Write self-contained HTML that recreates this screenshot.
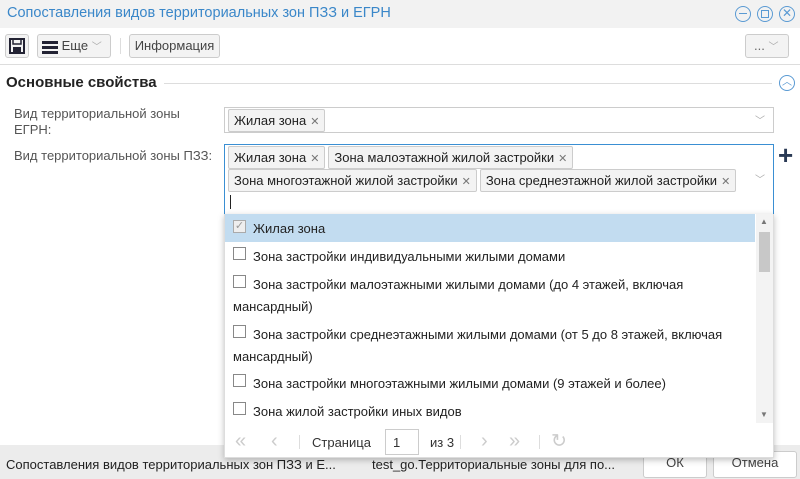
<!DOCTYPE html>
<html><head><meta charset="utf-8"><style>
*{box-sizing:border-box;margin:0;padding:0}
body{width:800px;height:479px;overflow:hidden;background:#fff;font-family:"Liberation Sans",Arial,sans-serif;font-size:13px;color:#333;position:relative}
.abs{position:absolute}
.title{left:0;top:0;width:800px;height:28px;background:#f2f2f2;color:#3a87c9;font-size:14.5px;line-height:27px;padding-left:7px}
.btn{border:1px solid #ccc;border-radius:3px;background:#f3f3f3;height:24px;line-height:22px;color:#444}
.circ{width:16px;height:16px;border:1.3px solid #5a9ad3;border-radius:50%}
.tag{display:inline-block;border:1px solid #ccc;border-radius:2px;background:#f3f3f3;height:23px;line-height:21px;padding:0 5px;margin:3px 0 0 3px;color:#222;font-size:13px}
.tag b{font-weight:normal;color:#777;margin-left:4px;font-size:11px}
.row{position:absolute;left:0;width:530px;padding-left:8px;line-height:22px;color:#222}
.cb{display:inline-block;width:13px;height:13px;border:1px solid #888;background:#fff;vertical-align:1px;margin-right:7px}
.pg{color:#ccc;font-size:20px}
.chev{color:#aaa;font-size:10px}
</style></head><body>
<div class="abs title">Сопоставления видов территориальных зон ПЗЗ и ЕГРН</div>
<div class="abs circ" style="left:735px;top:6px"><div style="position:absolute;left:3px;top:6px;width:8px;height:1.3px;background:#5a9ad3"></div></div>
<div class="abs circ" style="left:757px;top:6px"><div style="position:absolute;left:3px;top:3px;width:8px;height:8px;border:1px solid #5a9ad3"></div></div>
<div class="abs circ" style="left:779px;top:6px;color:#5a9ad3;font-size:12px;line-height:13px;text-align:center">✕</div>

<div class="abs btn" style="left:5px;top:34px;width:24px"><svg width="22" height="22" viewBox="0 0 22 22"><rect x="4" y="4" width="14" height="14" fill="none" stroke="#223" stroke-width="2"/><rect x="7" y="4" width="8" height="5" fill="none" stroke="#223" stroke-width="1.5"/><rect x="7" y="12" width="8" height="6" fill="#223"/></svg></div>
<div class="abs btn" style="left:37px;top:34px;width:74px;padding-left:4px"><span style="display:inline-block;width:16px;vertical-align:middle"><span style="display:block;height:3px;background:#223;margin:2px 0"></span><span style="display:block;height:3px;background:#223;margin:2px 0"></span><span style="display:block;height:3px;background:#223"></span></span> Еще <span class="chev">﹀</span></div>
<div class="abs" style="left:120px;top:38px;width:1px;height:16px;background:#ddd"></div>
<div class="abs btn" style="left:129px;top:34px;width:91px;text-align:center">Информация</div>
<div class="abs btn" style="left:745px;top:34px;width:44px;padding-left:8px;color:#666">... <span class="chev">﹀</span></div>
<div class="abs" style="left:0;top:64px;width:800px;height:1px;background:#ddd"></div>

<div class="abs" style="left:6px;top:74px;font-weight:bold;font-size:15px;color:#222">Основные свойства</div>
<div class="abs" style="left:164px;top:83px;width:608px;height:1px;background:#ddd"></div>
<div class="abs circ" style="left:779px;top:75px;color:#5a9ad3;font-size:10px;line-height:14px;text-align:center">︿</div>

<div class="abs" style="left:14px;top:106px;color:#555;line-height:16px">Вид территориальной зоны<br>ЕГРН:</div>
<div class="abs" style="left:14px;top:148px;color:#555">Вид территориальной зоны ПЗЗ:</div>

<div class="abs" style="left:224px;top:107px;width:550px;height:26px;border:1px solid #ccc"><span class="tag" style="margin-top:1px">Жилая зона<b>✕</b></span><span class="chev" style="position:absolute;right:8px;top:4px">﹀</span></div>
<div class="abs" style="left:224px;top:144px;width:550px;height:71px;border:1px solid #3a8fd3"><span class="tag" style="margin-top:1px">Жилая зона<b>✕</b></span><span class="tag" style="margin-top:1px">Зона малоэтажной жилой застройки<b>✕</b></span><br><span class="tag" style="margin-top:0">Зона многоэтажной жилой застройки<b>✕</b></span><span class="tag" style="margin-top:0">Зона среднеэтажной жилой застройки<b>✕</b></span><div style="position:absolute;left:5px;top:50px;width:1px;height:14px;background:#222"></div><span class="chev" style="position:absolute;right:8px;top:26px">﹀</span></div>
<div class="abs" style="left:778px;top:144px;font-size:26px;font-weight:bold;color:#2a3a55;line-height:22px">+</div>

<div class="abs" style="left:0;top:445px;width:800px;height:34px;background:#ececec"></div>
<div class="abs" style="left:6px;top:457px;color:#222">Сопоставления видов территориальных зон ПЗЗ и Е...</div>
<div class="abs" style="left:372px;top:457px;color:#222">test_go.Территориальные зоны для по...</div>
<div class="abs btn" style="left:643px;top:451px;width:64px;height:27px;background:#fff;text-align:center">ОК</div>
<div class="abs btn" style="left:713px;top:451px;width:84px;height:27px;background:#fff;text-align:center">Отмена</div>

<div class="abs" style="left:224px;top:214px;width:550px;height:244px;background:#fff;border:1px solid #ddd;border-top:none;box-shadow:0 2px 6px rgba(0,0,0,.25)">
<div class="abs" style="left:0;top:0;width:530px;height:28px;background:#c2dcf0"></div>
<div class="row" style="top:4px"><span class="cb" style="border-color:#aaa;background:#eee;color:#999;font-size:11px;line-height:11px;text-align:center;vertical-align:4px">✓</span>Жилая зона</div>
<div class="row" style="top:32px"><span class="cb"></span>Зона застройки индивидуальными жилыми домами</div>
<div class="row" style="top:60px"><span class="cb"></span>Зона застройки малоэтажными жилыми домами (до 4 этажей, включая мансардный)</div>
<div class="row" style="top:110px"><span class="cb"></span>Зона застройки среднеэтажными жилыми домами (от 5 до 8 этажей, включая мансардный)</div>
<div class="row" style="top:159px"><span class="cb"></span>Зона застройки многоэтажными жилыми домами (9 этажей и более)</div>
<div class="row" style="top:187px"><span class="cb"></span>Зона жилой застройки иных видов</div>
<div class="abs" style="left:531px;top:0;width:17px;height:209px;background:#f3f3f3"></div>
<div class="abs" style="left:534px;top:18px;width:11px;height:40px;background:#c8c8c8"></div>
<div class="abs" style="left:535px;top:3px;color:#777;font-size:8px">▲</div>
<div class="abs" style="left:535px;top:196px;color:#777;font-size:8px">▼</div>
<div class="abs pg" style="left:10px;top:216px">«</div>
<div class="abs pg" style="left:46px;top:216px">‹</div>
<div class="abs" style="left:74px;top:221px;width:1px;height:14px;background:#ddd"></div>
<div class="abs" style="left:87px;top:221px">Страница</div>
<div class="abs" style="left:160px;top:215px;width:34px;height:26px;border:1px solid #ccc;padding:5px 0 0 7px">1</div>
<div class="abs" style="left:205px;top:221px">из 3</div>
<div class="abs" style="left:235px;top:221px;width:1px;height:14px;background:#ddd"></div>
<div class="abs pg" style="left:256px;top:216px">›</div>
<div class="abs pg" style="left:284px;top:216px">»</div>
<div class="abs" style="left:314px;top:221px;width:1px;height:14px;background:#ddd"></div>
<div class="abs pg" style="left:326px;top:216px;font-size:19px">↻</div>
</div>
</body></html>
